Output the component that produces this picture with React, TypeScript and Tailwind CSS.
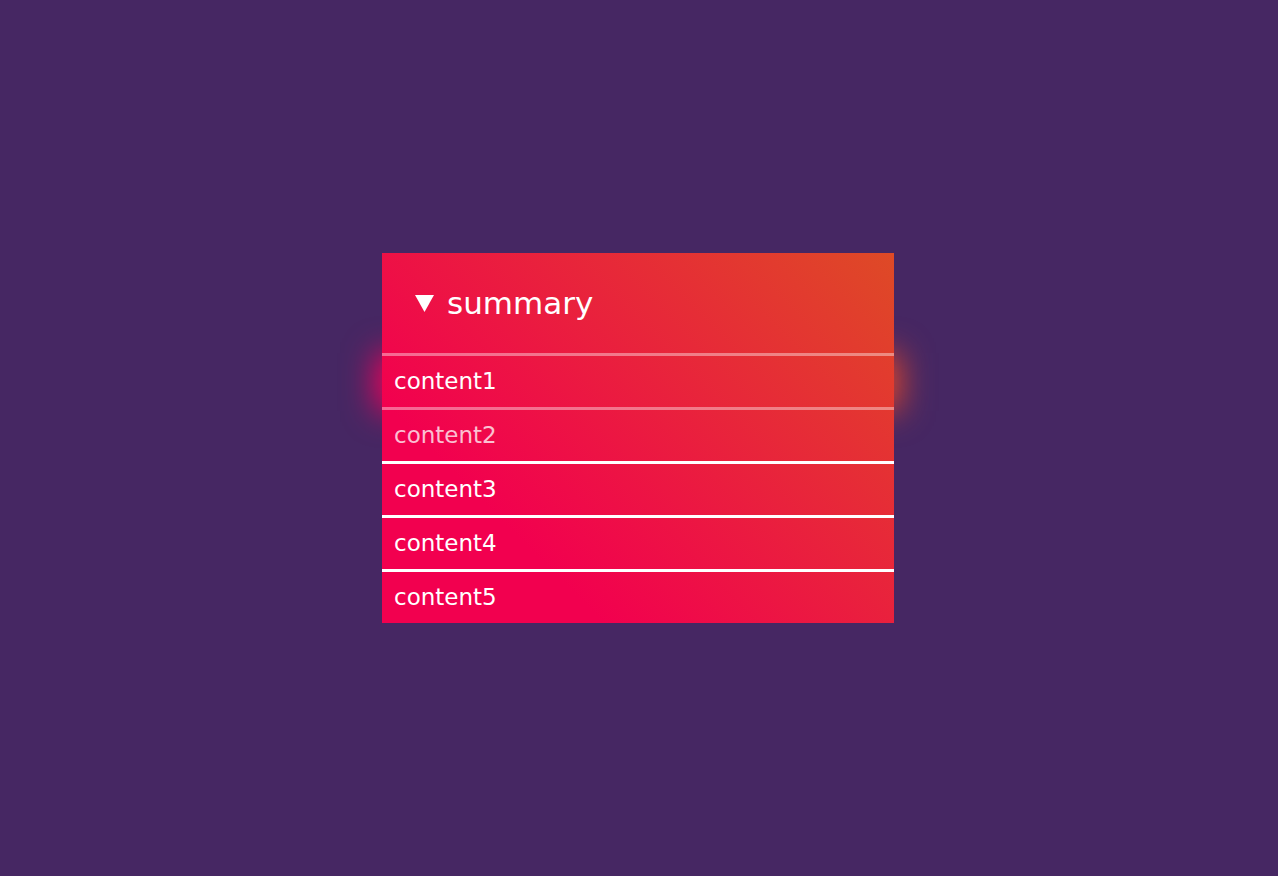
const rows = [
  { label: "content1", line: "border-white/40", text: "text-white" },
  { label: "content2", line: "border-white/40", text: "text-white/75" },
  { label: "content3", line: "border-white", text: "text-white" },
  { label: "content4", line: "border-white", text: "text-white" },
  { label: "content5", line: "border-white", text: "text-white" },
];

export default function App() {
  return (
    <main className="flex min-h-screen items-center justify-center bg-[#462763] font-['DejaVu_Sans',sans-serif]">
      <div className="relative mr-[2px] w-[512px]">
        {/* soft glow behind the first row */}
        <div className="absolute -left-[6px] -right-[6px] top-[100px] h-[58px] bg-[linear-gradient(90deg,#f5005a,#ef1048_50%,#e04a28)] blur-[16px]" />
        <section className="relative bg-[linear-gradient(45deg,#f2004f_25%,#de4a26_100%)] text-white">
          <header className="flex h-[100px] items-center gap-[13px] pl-[33px]">
            <svg width="19" height="17" viewBox="0 0 19 17" className="mt-[1px]">
              <path d="M0 0 H19 L9.5 17 Z" fill="#fff" />
            </svg>
            <span className="text-[31px] leading-none">summary</span>
          </header>
          {rows.map((r) => (
            <div
              key={r.label}
              className={`flex h-[54px] items-center border-t-[3px] px-3 text-[23px] ${r.line} ${r.text}`}
            >
              {r.label}
            </div>
          ))}
        </section>
      </div>
    </main>
  );
}
